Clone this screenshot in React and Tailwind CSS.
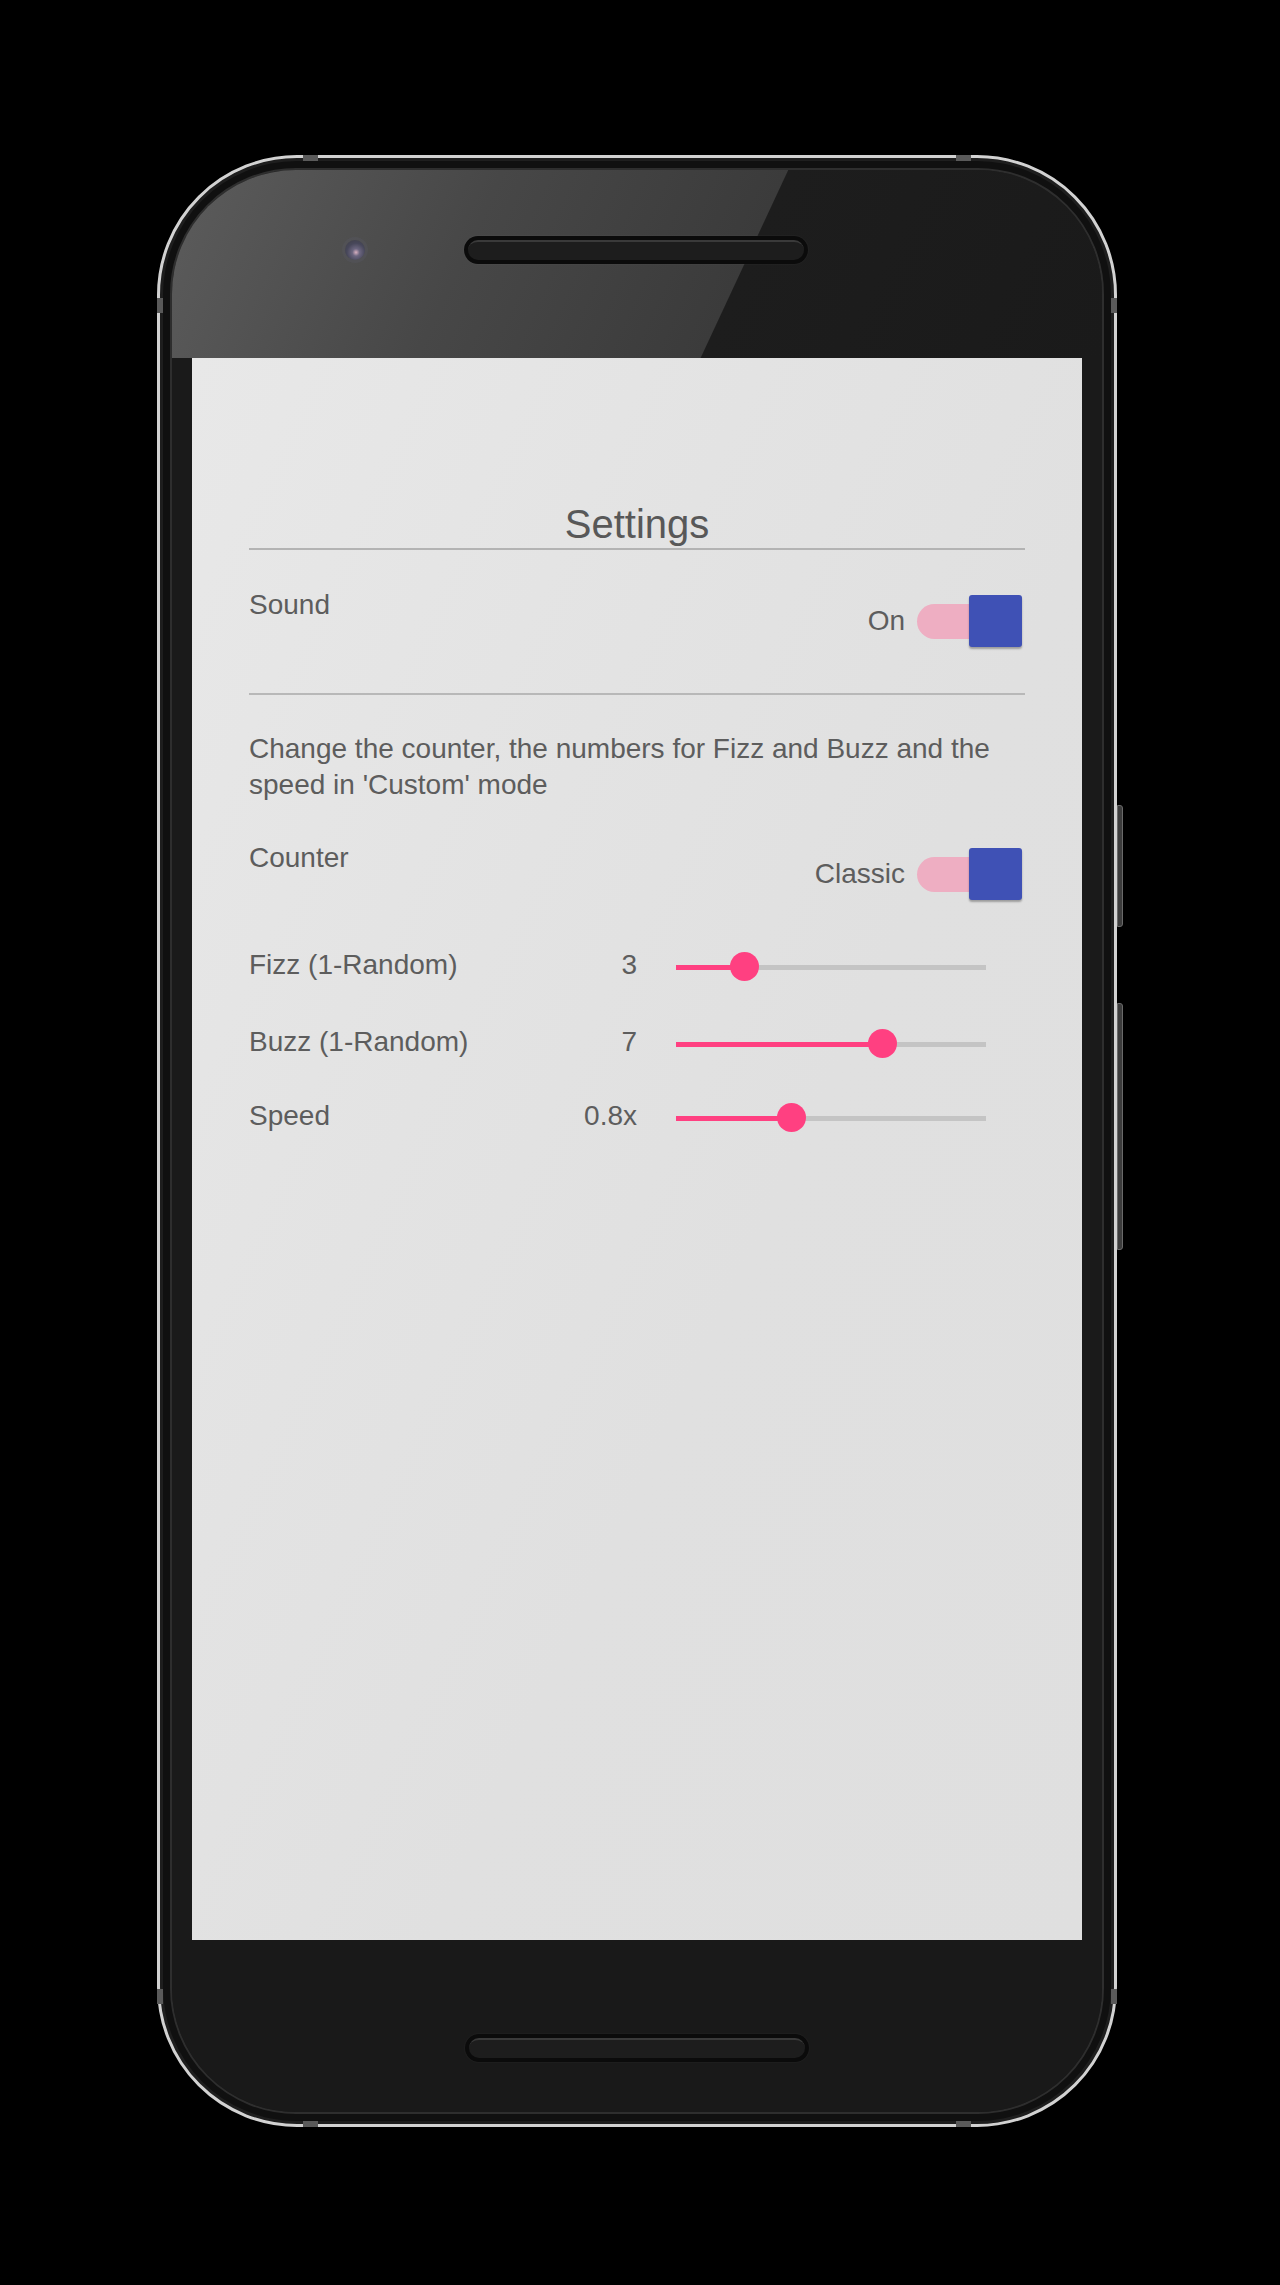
import React from "react";

const font = { fontFamily: '"Liberation Sans", Arial, sans-serif' };

function Toggle({ label }) {
  return (
    <div className="flex items-center mt-[8px] mr-[3px]">
      <span className="text-[28px] leading-[36px] text-[#5d5d5d]">{label}</span>
      <div className="relative ml-[12px] w-[105px] h-[52px] flex items-center">
        <div className="h-[35px] w-[89px] rounded-full bg-[#eeaec2]" />
        {/* thumb sits over the right end of the track */}
        <div className="absolute right-0 top-0 w-[53px] h-[52px] rounded-[3px] bg-[#3f51b5] shadow-[0_2px_2px_rgba(0,0,0,0.3)]" />
      </div>
    </div>
  );
}

function SliderRow({ label, value, pct, className }) {
  return (
    <div className={`flex items-center h-[36px] ${className}`}>
      <div className="w-[388px] flex items-center justify-between text-[28px] leading-[36px] text-[#5d5d5d]">
        <span>{label}</span>
        <span>{value}</span>
      </div>
      <div className="relative ml-[39px] w-[310px] h-[30px] flex items-center mt-[4px]">
        <div className="flex w-full h-[5px]">
          <div className="h-full bg-[#ff4081]" style={{ width: `${pct}%` }} />
          <div className="h-full flex-1 bg-[#c4c4c4]" />
        </div>
        <div
          className="absolute top-0 w-[29px] h-[29px] -ml-[14px] rounded-full bg-[#ff4081]"
          style={{ left: `${pct}%` }}
        />
      </div>
    </div>
  );
}

function Screen() {
  return (
    <div
      className="mx-[20px] h-[1582px] px-[57px] pt-[142px] bg-[linear-gradient(115deg,#e8e8e8_0%,#e3e3e3_35%,#e0e0e0_60%,#dfdfdf_100%)]"
      style={font}
    >
      <div className="h-[48px] leading-[48px] text-center text-[40px] text-[#585858]">Settings</div>
      <div className="h-[2px] bg-[#b3b3b3]" />

      <div className="flex justify-between items-start mt-[37px]">
        <span className="text-[28px] leading-[36px] text-[#5d5d5d]">Sound</span>
        <Toggle label="On" />
      </div>
      <div className="h-[2px] bg-[#b8b8b8] mt-[46px]" />

      <p className="mt-[36px] text-[28px] leading-[36px] text-[#5d5d5d]">
        Change the counter, the numbers for Fizz and Buzz and the speed in 'Custom' mode
      </p>

      <div className="flex justify-between items-start mt-[37px]">
        <span className="text-[28px] leading-[36px] text-[#5d5d5d]">Counter</span>
        <Toggle label="Classic" />
      </div>

      <SliderRow label="Fizz (1-Random)" value="3" pct={22} className="mt-[47px]" />
      <SliderRow label="Buzz (1-Random)" value="7" pct={66.5} className="mt-[41px]" />
      <SliderRow label="Speed" value="0.8x" pct={37} className="mt-[38px]" />
    </div>
  );
}

function Speaker() {
  return (
    <div className="w-[344px] h-[28px] rounded-full bg-[#0b0b0b] p-[4px] shadow-[0_0_2px_rgba(255,255,255,0.08)]">
      <div className="h-full rounded-full bg-[#1d1d1d] border-t-[2px] border-[#3a3a3a]" />
    </div>
  );
}

function Tab({ className }) {
  return <div className={`absolute bg-[#5a5a5a] ${className}`} />;
}

export default function App() {
  return (
    <div className="min-h-[2285px] bg-black pt-[155px] pl-[157px]">
      <div className="relative w-[960px] h-[1972px] rounded-[140px] border-[3px] border-[#d2d2d2] bg-[#101010] p-[10px] shadow-[inset_0_0_0_3px_#1e1e1e]">
        {/* antenna bands on the rim */}
        <Tab className="-top-[3px] left-[143px] w-[15px] h-[6px]" />
        <Tab className="-top-[3px] right-[143px] w-[15px] h-[6px]" />
        <Tab className="-bottom-[3px] left-[143px] w-[15px] h-[6px]" />
        <Tab className="-bottom-[3px] right-[143px] w-[15px] h-[6px]" />
        <Tab className="-left-[3px] top-[140px] w-[6px] h-[15px]" />
        <Tab className="-right-[3px] top-[140px] w-[6px] h-[15px]" />
        <Tab className="-left-[3px] bottom-[120px] w-[6px] h-[15px]" />
        <Tab className="-right-[3px] bottom-[120px] w-[6px] h-[15px]" />

        {/* side buttons */}
        <div className="absolute -right-[9px] top-[647px] w-[6px] h-[122px] rounded-r-[3px] bg-[#3c3c3c] border border-[#6a6a6a]" />
        <div className="absolute -right-[9px] top-[845px] w-[6px] h-[247px] rounded-r-[3px] bg-[#3c3c3c] border border-[#6a6a6a]" />

        <div className="h-full rounded-[126px] border-[2px] border-[#2e2e2e] bg-[#1a1a1a] overflow-hidden flex flex-col">
          <div className="h-[188px] shrink-0 pt-[66px] pl-[173px] bg-[linear-gradient(115deg,#5c5c5c_0px,#474747_300px,#3b3b3b_558px,#1d1d1d_559px,#1a1a1a_100%)]">
            <div className="flex items-center h-[28px]">
              <div className="w-[20px] h-[20px] rounded-full bg-[radial-gradient(circle_at_55%_62%,#d8b0c0_0%,#6c6680_22%,#47475a_55%,#3e3e44_100%)] shadow-[0_0_0_3px_rgba(90,90,100,0.35)]" />
              <div className="ml-[99px]">
                <Speaker />
              </div>
            </div>
          </div>

          <Screen />

          <div className="flex-1 bg-[#191919] flex justify-center pt-[94px]">
            <Speaker />
          </div>
        </div>
      </div>
    </div>
  );
}
